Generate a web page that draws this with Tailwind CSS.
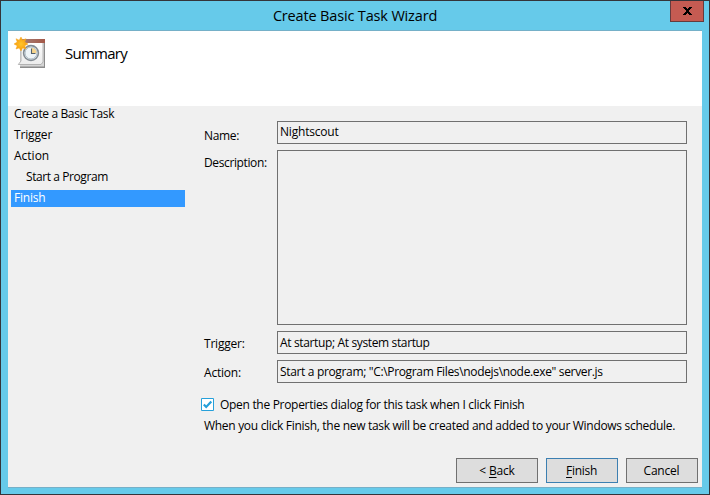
<!DOCTYPE html>
<html lang="en">
<head>
<meta charset="utf-8">
<title>Create Basic Task Wizard</title>
<script src="https://cdn.jsdelivr.net/npm/@tailwindcss/browser@4"></script>
</head>
<body class="w-[710px] h-[495px] overflow-hidden font-['Open_Sans','Noto_Sans',sans-serif] text-[12px] leading-[17px] text-black whitespace-nowrap">
<div class="w-[710px] h-[495px] border border-[#34343a] bg-[#66caea] flex flex-col px-[7px] pb-[6px]">
  <header class="relative h-[29px] shrink-0 flex items-center justify-center">
    <h1 class="text-[14.5px] leading-[20px] tracking-[-0.16px] pt-[1px]">Create Basic Task Wizard</h1>
    <button aria-label="Close" class="absolute right-[-2px] top-0 w-[34px] h-[21px] bg-[#c55b52] border border-t-0 border-[#653b3e] flex items-center justify-center">
      <svg width="9" height="8" viewBox="0 0 9 8" shape-rendering="crispEdges"><path d="M0 0h3v1h1v1h1V1h1V0h3v1H8v1H7v1H6v2h1v1h1v1h1v1H6V7H5V6H4v1H3v1H0V7h1V6h1V5h1V3H2V2H1V1H0z"/></svg>
    </button>
  </header>
  <main class="flex-1 flex flex-col bg-[#f0f0f0] border-y border-[#75b0c8]">
    <section class="h-[75px] shrink-0 bg-white flex items-start pl-[5px] pt-[6px]">
      <svg class="shrink-0" width="34" height="34" viewBox="0 0 34 34">
        <defs>
          <linearGradient id="paper" x1="0" y1="0" x2="0" y2="1"><stop offset="0" stop-color="#fff"/><stop offset="1" stop-color="#ececec"/></linearGradient>
          <linearGradient id="band" x1="0" y1="0" x2="1" y2="0"><stop offset="0" stop-color="#a48078"/><stop offset="1" stop-color="#a45848"/></linearGradient>
          <radialGradient id="sun"><stop offset="0" stop-color="#ffc52c"/><stop offset="1" stop-color="#f79a0c"/></radialGradient>
        </defs>
        <path d="M7 3H32V31H7Z" fill="#8c8c8c"/>
        <path d="M7 3H31V29.5H7Z" fill="#d5d5d5"/>
        <path d="M8 3H30V25L28 27.5H5.3L8 24Z" fill="url(#paper)" stroke="#a6a6a6" stroke-width=".8"/>
        <path d="M8 2H32V6H8Z" fill="url(#band)"/>
        <circle cx="18" cy="16" r="7.4" fill="#e6eef4" stroke="#838b92" stroke-width="1.6"/>
        <circle cx="18" cy="16" r="6" fill="#eef4f8" stroke="#b0bdc6" stroke-width="1"/>
        <path d="M18.5 16V10.8A5.5 5.5 0 0 1 23.5 16Z" fill="#f6d48c"/>
        <path d="M18.5 11.5V16.5H22.5" fill="none" stroke="#53616c" stroke-width="1.1"/>
        <path d="M8 0L9.6 3.2L13 1.7L11.7 5.1L15 7L11.7 8.7L13 12L9.6 10.9L8 14L6.2 10.9L3 12L4.2 8.7L1 7L4.2 5.1L3 1.7L6.2 3.2Z" fill="url(#sun)" stroke="#f7a823" stroke-width=".5"/>
      </svg>
      <h2 class="ml-[18px] mt-[6px] text-[15px] leading-[20px] tracking-[-0.75px]">Summary</h2>
    </section>
    <div class="flex-1 flex">
      <nav class="w-[177px] shrink-0 pl-[3px] flex flex-col gap-1">
        <div class="pl-[3px] leading-[16px] pb-[1px] tracking-[-0.37px]">Create a Basic Task</div>
        <div class="pl-[3px] leading-[16px] pb-[1px] tracking-[-0.15px]">Trigger</div>
        <div class="pl-[3px] leading-[16px] pb-[1px] tracking-[0px]">Action</div>
        <div class="pl-[15px] leading-[16px] pb-[1px] tracking-[-0.42px]">Start a Program</div>
        <div class="pl-[3px] leading-[16px] pb-[1px] tracking-[-0.2px] bg-[#3399ff] text-white">Finish</div>
      </nav>
      <section class="flex-1 flex flex-col pl-[16px] pt-[15px]">
        <div class="grid grid-cols-[73px_410px] grid-rows-[23px_175px_23px_23px] gap-y-[6px] pl-[3px]">
          <div class="pt-[6px] tracking-[-0.35px]">Name:</div>
          <div class="border border-[#707070] pl-[2px] pt-[2px] leading-[16px] tracking-[-0.2px]">Nightscout</div>
          <div class="pt-[4px] tracking-[-0.38px]">Description:</div>
          <div class="border border-[#707070]"></div>
          <div class="pt-[4px] tracking-[-0.2px]">Trigger:</div>
          <div class="border border-[#707070] pl-[2px] pt-[2px] tracking-[-0.36px]">At startup; At system startup</div>
          <div class="pt-[4px] tracking-[-0.2px]">Action:</div>
          <div class="border border-[#707070] pl-[2px] pt-[2px] tracking-[-0.34px]">Start a program; "C:\Program Files\nodejs\node.exe" server.js</div>
        </div>
        <div class="mt-[13px] flex items-center gap-[6px]">
          <svg class="shrink-0" width="13" height="13" viewBox="0 0 13 13"><path d="M.5.5h12v12H.5z" fill="#fff" stroke="#26a0da"/><path d="M2.8 6.5L5.2 9L10.3 3.5" fill="none" stroke="#26a0da" stroke-width="2.2"/></svg>
          <span class="tracking-[-0.3px]">Open the Properties dialog for this task when I click Finish</span>
        </div>
        <p class="pl-[3px] mt-[4px] tracking-[-0.3px]">When you click Finish, the new task will be created and added to your Windows schedule.</p>
        <div class="mt-auto mb-[4px] mr-[4px] flex justify-end gap-[8px]">
          <button class="w-[82px] h-[25px] bg-[#dddddd] border border-[#707070] tracking-[-0.2px]">&lt; <span class="underline underline-offset-2">B</span>ack</button>
          <button class="w-[72px] h-[25px] bg-[#dddddd] border border-[#3c7fb1] tracking-[-0.3px] pr-[1px]"><span class="underline underline-offset-2">F</span>inish</button>
          <button class="w-[72px] h-[25px] bg-[#dddddd] border border-[#707070] tracking-[-0.2px] pr-[1px]">Cancel</button>
        </div>
      </section>
    </div>
  </main>
</div>
</body>
</html>
